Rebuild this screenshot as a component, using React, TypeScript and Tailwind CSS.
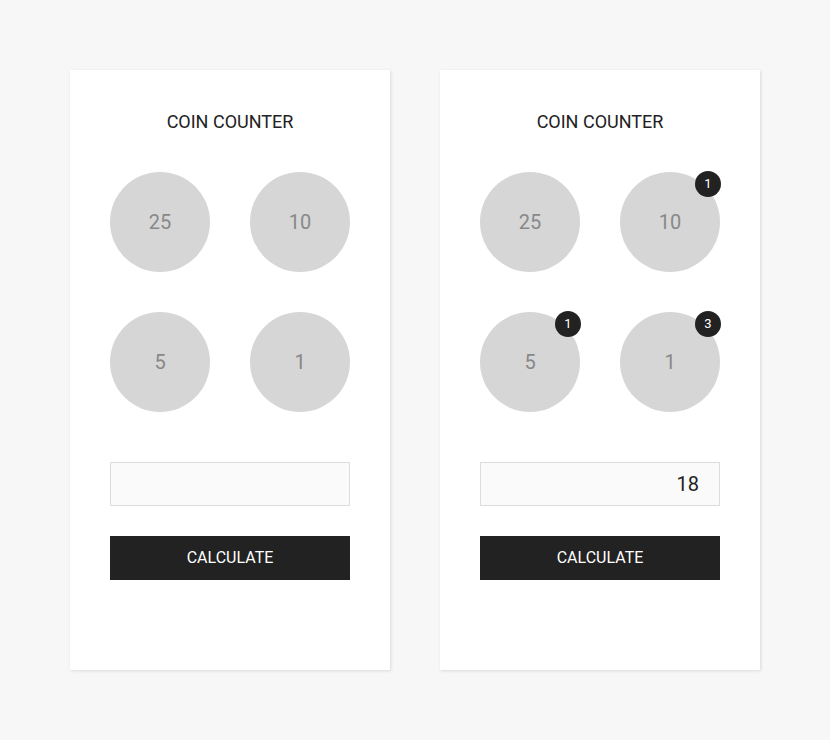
import React from 'react';

const COINS = [25, 10, 5, 1];

interface CounterProps {
  counts: Record<number, number>;
  total?: string;
}

const Counter: React.FC<CounterProps> = ({ counts, total }) => {
  return (
    <div className="w-[320px] h-[600px] bg-white shadow-[1px_1px_3px_rgba(0,0,0,0.12)] px-10 pt-10">
      <h1 className="text-center text-[18px] leading-6 text-[#222]">COIN COUNTER</h1>
      <div className="grid grid-cols-2 gap-10 mt-[38px]">
        {COINS.map(c => (
          <div key={c} className="relative w-[100px] h-[100px] rounded-full bg-[#d6d6d6] flex items-center justify-center text-[20px] text-[#888]">
            {c}
            {counts[c] ? (
              <span className="absolute -top-px -right-px w-[26px] h-[26px] rounded-full bg-[#222] text-white text-[13px] flex items-center justify-center">
                {counts[c]}
              </span>
            ) : null}
          </div>
        ))}
      </div>
      <input
        readOnly
        value={total || ''}
        className="mt-[50px] w-full h-[44px] bg-[#fafafa] border border-[#dcdcdc] text-right pr-5 text-[20px] text-[#222] outline-none"
      />
      <button className="mt-[30px] w-full h-[44px] bg-[#222] text-white text-[16px]">CALCULATE</button>
    </div>
  );
};

export default function App() {
  return (
    <div className="w-[830px] h-[740px] bg-[#f7f7f7] flex gap-[50px] pt-[70px] pl-[70px]" style={{ fontFamily: 'Roboto, sans-serif' }}>
      <Counter counts={{}} />
      <Counter counts={{ 10: 1, 5: 1, 1: 3 }} total="18" />
    </div>
  );
}
